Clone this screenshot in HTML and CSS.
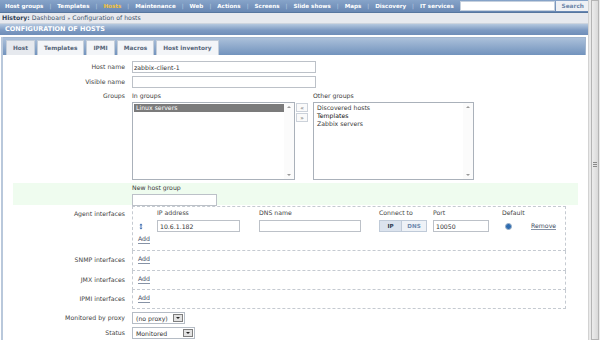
FILE: index.html
```html
<!DOCTYPE html>
<html>
	<head>
		<meta charset="UTF-8">
		<title>Configuration of hosts</title>
		<link rel="stylesheet" href="styles.css">
	</head>
	<body>
		<div class="page">
			<div class="main">
				<div class="topnav">
					<a>Host groups</a><i>|</i>
					<a>Templates</a><i>|</i>
					<a class="cur">Hosts</a><i>|</i>
					<a>Maintenance</a><i>|</i>
					<a>Web</a><i>|</i>
					<a>Actions</a><i>|</i>
					<a>Screens</a><i>|</i>
					<a>Slide shows</a><i>|</i>
					<a>Maps</a><i>|</i>
					<a>Discovery</a><i>|</i>
					<a>IT services</a>
					<div class="search">
						<span class="search-box"></span>
						<span class="search-btn">Search</span>
					</div>
				</div>

				<div class="history"><b>History:</b> Dashboard <span class="raquo">»</span> Configuration of hosts</div>
				<div class="header">CONFIGURATION OF HOSTS</div>

				<div class="tabs-panel">
					<div class="tabs">
						<span class="tab active">Host</span>
						<span class="tab">Templates</span>
						<span class="tab">IPMI</span>
						<span class="tab">Macros</span>
						<span class="tab">Host inventory</span>
					</div>

					<div class="form">
						<div class="row">
							<div class="lbl">Host name</div>
							<div class="fld"><input class="inp w184" type="text" value="zabbix-client-1"></div>
						</div>
						<div class="row">
							<div class="lbl">Visible name</div>
							<div class="fld"><input class="inp w184" type="text" value=""></div>
						</div>

						<div class="row">
							<div class="lbl lbl-top">Groups</div>
							<div class="fld groupsel">
								<div class="gcol">
									<div class="sub">In groups</div>
									<div class="listbox lb-in">
										<div class="opts"><div class="opt sel">Linux servers</div></div>
										<div class="sb"><span class="up"></span><span class="down"></span></div>
									</div>
								</div>
								<div class="movebtns">
									<span class="mbtn">«</span>
									<span class="mbtn">»</span>
								</div>
								<div class="gcol">
									<div class="sub">Other groups</div>
									<div class="listbox lb-other">
										<div class="opts">
											<div class="opt">Discovered hosts</div>
											<div class="opt dark">Templates</div>
											<div class="opt">Zabbix servers</div>
										</div>
										<div class="sb"><span class="up"></span><span class="down"></span></div>
									</div>
								</div>
							</div>
						</div>

						<div class="row newgroup">
							<div class="lbl"></div>
							<div class="fld">
								<div class="sub">New host group</div>
								<input class="inp w85" type="text" value="">
							</div>
						</div>

						<div class="row iface first">
							<div class="lbl lbl-agent">Agent interfaces</div>
							<div class="fld ibox agent">
								<div class="itable">
									<span></span>
									<span class="th">IP address</span>
									<span class="th">DNS name</span>
									<span class="th">Connect to</span>
									<span class="th">Port</span>
									<span class="th">Default</span>
									<span></span>

									<span class="drag">
										<svg width="4" height="7" viewBox="0 0 4 7"><path d="M2 0.5 L3.6 2.2 H0.4 Z M2 6.5 L3.6 4.8 H0.4 Z M1.5 2 H2.5 V5 H1.5 Z" fill="#3b6bb0"/></svg>
									</span>
									<span><input class="inp w83 pad2" type="text" value="10.6.1.182"></span>
									<span><input class="inp w102" type="text" value=""></span>
									<span class="conn"><b class="on">IP</b><b>DNS</b></span>
									<span><input class="inp w56 pad2" type="text" value="10050"></span>
									<span class="radio-cell"><span class="radio"></span></span>
									<span><a class="link">Remove</a></span>
								</div>
								<a class="link add add-agent">Add</a>
							</div>
						</div>
						<div class="row iface r20">
							<div class="lbl">SNMP interfaces</div>
							<div class="fld ibox"><a class="link add">Add</a></div>
						</div>
						<div class="row iface r19">
							<div class="lbl">JMX interfaces</div>
							<div class="fld ibox"><a class="link add">Add</a></div>
						</div>
						<div class="row iface r19 last">
							<div class="lbl">IPMI interfaces</div>
							<div class="fld ibox"><a class="link add">Add</a></div>
						</div>

						<div class="row sel-row">
							<div class="lbl">Monitored by proxy</div>
							<div class="fld"><span class="select w53">(no proxy)<span class="dd"></span></span></div>
						</div>
						<div class="row sel-row">
							<div class="lbl">Status</div>
							<div class="fld"><span class="select w63">Monitored<span class="dd"></span></span></div>
						</div>
					</div>
				</div>
			</div>

			<div class="vscroll">
				<div class="thumb"><span class="grip"></span></div>
			</div>
		</div>
	</body>
</html>
```

FILE: styles.css
```css
body{
	margin: 0;
	font-family: "DejaVu Sans", Verdana, sans-serif;
	font-size: 6.2px;
	color: #3a3a3a;
	background: #fff;
}
.page{
	display: flex;
	height: 340px;
	overflow: hidden;
}
.main{
	width: 588px;
	flex: none;
}

/* top menu */
.topnav{
	height: 12px;
	display: flex;
	align-items: center;
	gap: 6px;
	padding: 0 2px 0 5px;
	background: linear-gradient(#87a4c9, #6887b3);
	border-bottom: 1px solid #56769f;
	color: #fff;
	font-weight: bold;
	font-size: 5.6px;
	white-space: nowrap;
}
.topnav i{
	font-style: normal;
	font-weight: normal;
	color: #bccde2;
}
.topnav .cur{
	color: #f4c23c;
}
.search{
	margin-left: auto;
	display: flex;
	gap: 1px;
}
.search-box{
	width: 95px;
	height: 10px;
	box-sizing: border-box;
	background: #fff;
	border: 1px solid #c5d0de;
}
.search-btn{
	width: 34px;
	height: 10px;
	line-height: 10px;
	text-align: center;
	background: #eef0f4;
	color: #6a84a8;
	font-size: 5.8px;
}

.history{
	height: 10px;
	line-height: 10px;
	padding-left: 2px;
	background: #e7e9ee;
	border-bottom: 1px solid #cdd4de;
	color: #40526b;
	white-space: nowrap;
}
.history b{
	color: #2f3e55;
}
.raquo{
	font-size: 5px;
}

.header{
	height: 11px;
	line-height: 11px;
	padding-left: 5px;
	background: linear-gradient(#b5c8df, #7e9bc3 55%, #6e8db8);
	color: #fff;
	font-weight: bold;
	font-size: 6.5px;
}

/* tabs */
.tabs-panel{
	margin: 2px 2px 0 1px;
	border-left: 2px solid #b9c8db;
	height: 320px;
}
.tabs{
	height: 18px;
	box-sizing: border-box;
	display: flex;
	align-items: flex-end;
	gap: 2px;
	padding-left: 3px;
	background: linear-gradient(#abc0da, #7293bd);
	border: 1px solid #a2b6cf;
	border-left: 0;
	border-bottom: 0;
}
.tab{
	height: 14px;
	line-height: 14px;
	padding: 0 6px;
	background: #f3f5f8;
	border: 1px solid #c3cdd9;
	border-bottom: 0;
	color: #566579;
	font-weight: bold;
	font-size: 5.8px;
	white-space: nowrap;
}
.tab.active{
	background: #e6e9ee;
}

/* form */
.form{
	padding: 6px 8px 0 10px;
}
.row{
	display: flex;
	margin-bottom: 3px;
}
.lbl{
	width: 119px;
	flex: none;
	box-sizing: border-box;
	padding-right: 7px;
	text-align: right;
	line-height: 12px;
	color: #444;
	white-space: nowrap;
}
.lbl-top{
	line-height: 10px;
}
.fld{
	flex: none;
}
.inp{
	display: block;
	height: 12px;
	box-sizing: border-box;
	margin: 0;
	padding: 0 1px;
	border: 1px solid #bcc1c8;
	font-family: inherit;
	font-size: 6.2px;
	color: #333;
	background: #fff;
	outline: none;
}
.pad2{ padding: 0 2px; }
.w184{ width: 184px; }
.w85{ width: 85px; }
.w83{ width: 83px; }
.w102{ width: 102px; }
.w56{ width: 56px; }

.sub{
	height: 10px;
	line-height: 10px;
	margin-bottom: 1px;
}

/* groups */
.groupsel{
	display: flex;
}
.listbox{
	height: 78px;
	box-sizing: border-box;
	display: flex;
	border: 1px solid #aab1ba;
	background: #fff;
}
.lb-in{ width: 163px; }
.lb-other{ width: 161px; }
.opts{
	flex: 1;
	padding: 1px 0 0 1px;
}
.opt{
	height: 8px;
	line-height: 8px;
	padding-left: 2px;
}
.opt.sel{
	background: #7b7b7b;
	color: #fff;
}
.opt.dark{
	color: #111;
}
.sb{
	width: 10px;
	display: flex;
	flex-direction: column;
	justify-content: space-between;
	align-items: center;
	padding: 3px 0;
	background: #fbfbfb;
}
.sb .up, .sb .down{
	width: 0;
	height: 0;
	border-left: 2px solid transparent;
	border-right: 2px solid transparent;
}
.sb .up{ border-bottom: 2px solid #9a9a9a; }
.sb .down{ border-top: 2px solid #9a9a9a; }

.movebtns{
	display: flex;
	flex-direction: column;
	gap: 1px;
	margin: 12px 5px 0 1px;
}
.mbtn{
	width: 12px;
	height: 9px;
	line-height: 8px;
	box-sizing: border-box;
	text-align: center;
	border: 1px solid #ccd2da;
	background: #fafafa;
	color: #555;
	font-size: 6px;
}

.newgroup{
	background: #effcef;
	height: 22px;
	box-sizing: border-box;
	margin-bottom: 1px;
}

/* interfaces */
.row.iface{
	margin-bottom: 0;
}
.ibox{
	width: 434px;
	box-sizing: border-box;
	border: 1px dashed #c5cad1;
	border-top: 0;
	display: flex;
	flex-direction: column;
	justify-content: center;
}
.first .ibox{
	border-top: 1px dashed #c5cad1;
}
.agent{
	height: 45px;
	justify-content: flex-start;
	padding-top: 1px;
}
.r20 .ibox{ height: 20px; }
.r19 .ibox{ height: 19px; }
.iface .lbl{
	align-self: center;
	margin-top: -2px;
}
.iface .lbl-agent{
	align-self: flex-start;
	margin-top: 0;
	padding-top: 3px;
	line-height: 10px;
}
.itable{
	display: grid;
	grid-template-columns: 24px 102px 120px 54px 69px 29px auto;
	grid-template-rows: 9px 12px;
	row-gap: 3px;
	align-items: center;
}
.th{
	line-height: 9px;
	color: #444;
}
.drag{
	display: flex;
	justify-content: center;
	padding-right: 8px;
}
.conn{
	display: flex;
	width: 48px;
	height: 12px;
	box-sizing: border-box;
	border: 1px solid #bfcad8;
}
.conn b{
	flex: 1;
	line-height: 10px;
	text-align: center;
	background: #eef2f7;
	color: #6f8aae;
	font-size: 5.6px;
}
.conn b.on{
	flex: none;
	width: 21px;
	background: #dbe3ee;
	color: #2d3b50;
	border-right: 1px solid #bfcad8;
}
.radio-cell{
	padding-left: 3px;
}
.radio{
	display: block;
	width: 5px;
	height: 5px;
	border-radius: 50%;
	background: #2f6cb0;
	border: 1px solid #9db2c9;
}
.link{
	color: #3b4b63;
	border-bottom: 1px solid #8793a6;
	line-height: 8px;
}
.add{
	align-self: flex-start;
	margin-left: 5px;
	margin-top: -2px;
}
.add.add-agent{
	margin-top: 3px;
}

/* selects */
.sel-row{
	margin-bottom: 3px;
}
.iface.last{
	margin-bottom: 3px;
}
.select{
	display: flex;
	align-items: center;
	justify-content: space-between;
	height: 12px;
	box-sizing: border-box;
	padding: 0 1px 0 3px;
	border: 1px solid #b5bcc5;
	background: #fff;
	color: #333;
}
.w53{ width: 53px; }
.w63{ width: 63px; }
.dd{
	width: 10px;
	height: 8px;
	box-sizing: border-box;
	border: 1px solid #7e7e7e;
	background: #e2e2e2;
	display: flex;
	align-items: center;
	justify-content: center;
}
.dd::after{
	content: "";
	border-left: 2px solid transparent;
	border-right: 2px solid transparent;
	border-top: 2px solid #222;
}

/* page scrollbar */
.vscroll{
	width: 12px;
	flex: none;
	box-sizing: border-box;
	padding: 0 1px 0 2px;
	background: #e9e9e9;
	border-left: 1px solid #d2d2d2;
}
.thumb{
	height: 100%;
	box-sizing: border-box;
	border: 1px solid #b4b4b4;
	background: linear-gradient(90deg, #ececec, #d9d9d9);
	display: flex;
	align-items: center;
	justify-content: center;
}
.grip{
	width: 4px;
	height: 5px;
	background: repeating-linear-gradient(#8a8a8a 0 1px, transparent 1px 2px);
	margin-top: -12px;
}
```
